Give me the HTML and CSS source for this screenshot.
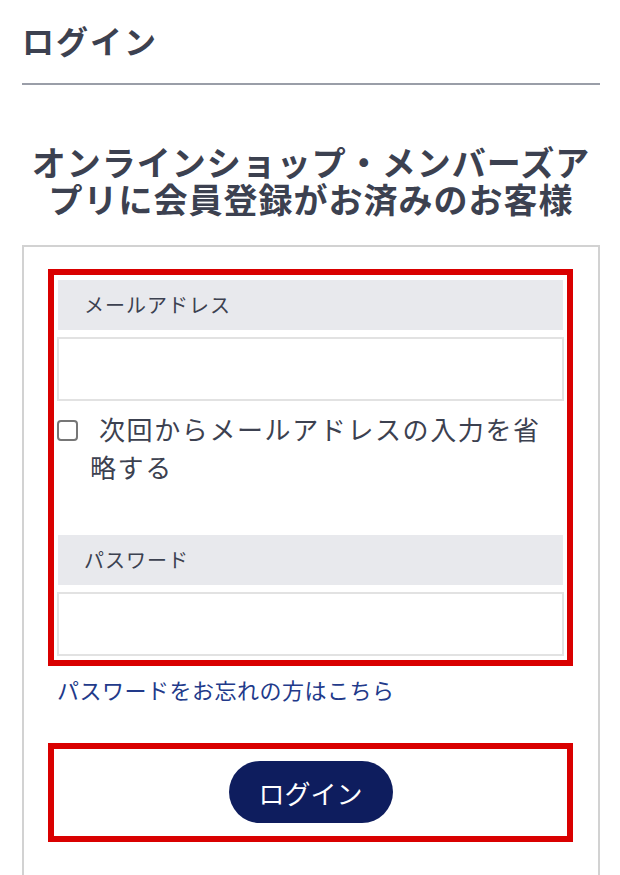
FILE: index.html
```html
<!DOCTYPE html>
<html lang="ja">
<head>
  <meta charset="UTF-8">
  <meta name="viewport" content="width=device-width, initial-scale=1.0">
  <title>ログイン</title>
  <link rel="stylesheet" href="styles.css">
</head>
<body>
  <header class="page-header">
    <h1>ログイン</h1>
  </header>

  <h2 class="lead">オンラインショップ・メンバーズアプリに会員登録がお済みのお客様</h2>

  <div class="login-box">
    <form class="login-form">
      <div class="field-group">
        <div class="field-label">メールアドレス</div>
        <input type="email" class="field-input" id="mail">
        <label class="remember">
          <input type="checkbox" id="rememberMail">次回からメールアドレスの入力を省略する
        </label>
        <div class="field-label field-label--pw">パスワード</div>
        <input type="password" class="field-input" id="password">
      </div>

      <a href="#" class="forgot">パスワードをお忘れの方はこちら</a>

      <div class="submit-area">
        <button type="submit" class="login-btn">ログイン</button>
      </div>
    </form>
  </div>
</body>
</html>
```

FILE: styles.css
```css
body {
  font-family: 'Noto Sans CJK JP', 'Noto Sans', sans-serif;
  margin: 0;
  padding: 0 20px 0 22px;
  color: #3c4150;
  background: white;
}

.page-header {
  border-bottom: 2px solid #9a9ea8;
  padding: 21px 0 24px;
}

.page-header h1 {
  margin: 0;
  font-size: 32px;
  line-height: 38px;
  letter-spacing: 2px;
  font-weight: bold;
  color: #3c4150;
}

.lead {
  margin: 58px 0 28px;
  padding: 0 5px;
  text-align: center;
  font-size: 34px;
  line-height: 37px;
  letter-spacing: 1px;
  font-weight: bold;
  color: #3c4150;
}

.login-box {
  border: 2px solid #d2d2d2;
  border-bottom: none;
  padding: 22px 25px 60px 24px;
}

.field-group {
  border: 6px solid #d90000;
  padding: 5px 3px 4px;
}

.field-label {
  margin: 0 1px;
  height: 50px;
  line-height: 50px;
  padding-left: 26px;
  background: #e8e9ed;
  font-size: 20px;
  letter-spacing: 1px;
  color: #3c4150;
}

.field-label--pw {
  margin-top: 49px;
}

.field-input {
  display: block;
  box-sizing: border-box;
  width: 100%;
  height: 64px;
  margin-top: 7px;
  border: 2px solid #e2e2e2;
  background: white;
  outline: none;
}

.remember {
  display: block;
  margin-top: 9px;
  padding-left: 33px;
  font-size: 26px;
  line-height: 38px;
  letter-spacing: 1.6px;
  color: #3c4150;
}

.remember input[type="checkbox"] {
  -webkit-appearance: none;
  appearance: none;
  box-sizing: border-box;
  width: 21px;
  height: 21px;
  margin: 0 21px 0 -33px;
  border: 2px solid #767676;
  border-radius: 4px;
  background: white;
  vertical-align: -1px;
}

.forgot {
  display: block;
  margin-top: 7px;
  padding-left: 9px;
  font-size: 22px;
  line-height: 33px;
  letter-spacing: 0.5px;
  color: #223a8a;
  text-decoration: none;
}

.submit-area {
  margin-top: 37px;
  border: 6px solid #d90000;
  padding: 12px 0 13px;
  text-align: center;
}

.login-btn {
  width: 164px;
  height: 62px;
  border: none;
  border-radius: 31px;
  background: #0e1d5e;
  color: white;
  font-family: inherit;
  font-size: 26px;
  cursor: pointer;
}
```
